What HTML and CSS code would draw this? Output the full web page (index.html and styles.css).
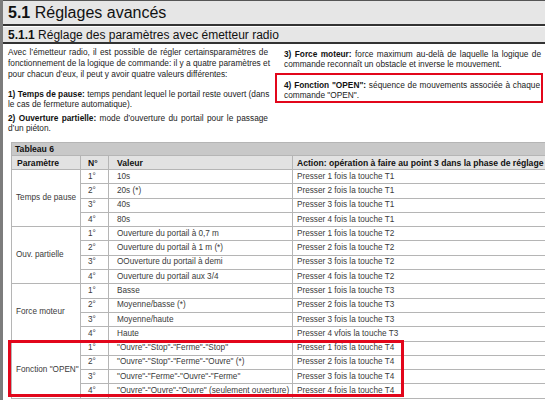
FILE: index.html
```html
<!DOCTYPE html>
<html lang="fr">
<head>
<meta charset="utf-8">
<link rel="stylesheet" href="styles.css">
</head>
<body>
<div class="page">
  <div class="h1"><b>5.1</b> Réglages avancés</div>
  <div class="h2"><b>5.1.1</b> Réglage des paramètres avec émetteur radio</div>
  <div class="cols">
    <div class="col left">
      <p class="pa"><span class="ln">Avec l’émetteur radio, il est possible de régler certainsparamètres de</span><span class="ln">fonctionnement de la logique de commande: il y a quatre paramètres et</span><span class="last">pour chacun d’eux, il peut y avoir quatre valeurs différentes:</span></p>
      <p class="pb"><span class="ln"><b>1) Temps de pause:</b> temps pendant lequel le portail reste ouvert (dans</span><span class="last">le cas de fermeture automatique).</span></p>
      <p class="pc"><span class="ln"><b>2) Ouverture partielle:</b> mode d’ouverture du portail pour le passage</span><span class="last">d’un piéton.</span></p>
    </div>
    <div class="col right">
      <p class="p3"><span class="ln"><b>3) Force moteur:</b> force maximum au-delà de laquelle la logique de</span><span class="last">commande reconnaît un obstacle et inverse le mouvement.</span></p>
      <p class="hl"><span class="ln"><b>4) Fonction "OPEN":</b> séquence de mouvements associée à chaque</span><span class="last">commande "OPEN".</span></p>
    </div>
  </div>
  <div class="tablewrap">
    <table class="tbl">
      <colgroup><col class="c1"><col class="c2"><col class="c3"><col class="c4"></colgroup>
      <thead>
        <tr class="cap"><th colspan="4">Tableau 6</th></tr>
        <tr class="hd"><th>Paramètre</th><th class="n">N°</th><th class="v">Valeur</th><th>Action: opération à faire au point 3 dans la phase de réglage</th></tr>
      </thead>
      <tbody>
        <tr><td rowspan="4" class="par">Temps de pause</td><td class="n">1°</td><td class="v">10s</td><td>Presser 1 fois la touche T1</td></tr>
        <tr><td class="n">2°</td><td class="v">20s (*)</td><td>Presser 2 fois la touche T1</td></tr>
        <tr><td class="n">3°</td><td class="v">40s</td><td>Presser 3 fois la touche T1</td></tr>
        <tr><td class="n">4°</td><td class="v">80s</td><td>Presser 4 fois la touche T1</td></tr>
        <tr><td rowspan="4" class="par">Ouv. partielle</td><td class="n">1°</td><td class="v">Ouverture du portail à 0,7 m</td><td>Presser 1 fois la touche T2</td></tr>
        <tr><td class="n">2°</td><td class="v">Ouverture du portail à 1 m (*)</td><td>Presser 2 fois la touche T2</td></tr>
        <tr><td class="n">3°</td><td class="v">OOuverture du portail à demi</td><td>Presser 3 fois la touche T2</td></tr>
        <tr><td class="n">4°</td><td class="v">Ouverture du portail aux 3/4</td><td>Presser 4 fois la touche T2</td></tr>
        <tr><td rowspan="4" class="par">Force moteur</td><td class="n">1°</td><td class="v">Basse</td><td>Presser 1 fois la touche T3</td></tr>
        <tr><td class="n">2°</td><td class="v">Moyenne/basse (*)</td><td>Presser 2 fois la touche T3</td></tr>
        <tr><td class="n">3°</td><td class="v">Moyenne/haute</td><td>Presser 3 fois la touche T3</td></tr>
        <tr><td class="n">4°</td><td class="v">Haute</td><td>Presser 4 vfois la touche T3</td></tr>
        <tr><td rowspan="4" class="par">Fonction "OPEN"</td><td class="n">1°</td><td class="v">"Ouvre"-"Stop"-"Ferme"-"Stop"</td><td>Presser 1 fois la touche T4</td></tr>
        <tr><td class="n">2°</td><td class="v">"Ouvre"-"Stop"-"Ferme"-"Ouvre" (*)</td><td>Presser 2 fois la touche T4</td></tr>
        <tr><td class="n">3°</td><td class="v">"Ouvre"-"Ferme"-"Ouvre"-"Ferme"</td><td>Presser 3 fois la touche T4</td></tr>
        <tr><td class="n">4°</td><td class="v">"Ouvre"-"Ouvre"-"Ouvre" (seulement ouverture)</td><td>Presser 4 fois la touche T4</td></tr>
      </tbody>
    </table>
    <div class="redbox"></div>
  </div>
</div>
</body>
</html>
```

FILE: styles.css
```css
html, body { margin: 0; padding: 0; background: #fff; }
body { font-family: "Liberation Sans", Arial, sans-serif; color: #222; width: 545px; height: 400px; overflow: hidden; }
.page { border-left: 3px solid #7c7c7c; height: 400px; box-sizing: border-box; }
.h1 { border-top: 1px solid #555; background: #e6e6e6; height: 23px; line-height: 24px; font-size: 16px; color: #111; padding-left: 5px; border-bottom: 2px solid #333; }
.h2 { margin-top: 1px; background: #e6e6e6; height: 15px; line-height: 16px; font-size: 12px; color: #111; padding-left: 5px; border-bottom: 2px solid #333; }
.cols { display: grid; grid-template-columns: 260px 268px; column-gap: 7px; padding-left: 5px; padding-top: 3px; }
.col p { margin: 0; font-size: 8.3px; line-height: 10px; color: #222; }
.col b { color: #111; }
.left .pa { line-height: 11px; }
.left .pb { margin-top: 8.5px; }
.left .pc { margin-top: 4px; }
.ln { display: block; text-align: justify; text-align-last: justify; white-space: nowrap; }
.last { display: block; white-space: nowrap; }
.right .p3 { padding: 2px 2px 0 9px; }
.right .hl { border: 2px solid #e2061b; padding: 5px 1px 1px 7px; margin-top: 4px; }
.tablewrap { position: relative; margin-left: 8px; margin-top: 9.5px; }
.tbl { border-collapse: collapse; table-layout: fixed; width: 540px; font-size: 8.2px; }
.c1 { width: 69px; } .c2 { width: 28px; } .c3 { width: 184px; } .c4 { width: 259px; }
.tbl th, .tbl td { border: 1px solid #b5b5b5; text-align: left; padding: 0 4px; line-height: 10px; white-space: nowrap; overflow: hidden; }
.tbl tbody tr { height: 14.3px; }
.tbl .cap { height: 13.4px; }
.tbl .hd { height: 13.6px; }
.tbl .cap th { background: #c8c8c8; font-weight: bold; color: #111; font-size: 8.6px; padding-left: 3px; }
.tbl .hd th { background: #e2e2e2; color: #111; font-size: 8.6px; }
.tbl .hd th:first-child { padding-left: 5px; }
.tbl td { color: #3a3a3a; vertical-align: middle; }
.tbl .n { padding-left: 7px; }
.tbl .v { padding-left: 8px; }
.tbl td.par { padding-left: 4px; }
.redbox { position: absolute; left: -3px; top: 198px; width: 390px; height: 51px; border: 3px solid #e2061b; pointer-events: none; }
```
